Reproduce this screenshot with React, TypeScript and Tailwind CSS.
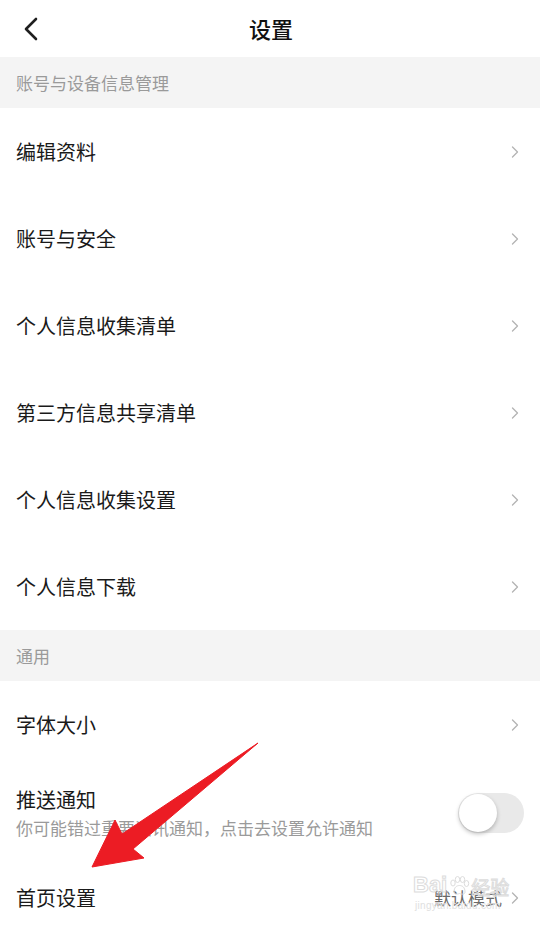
import React from "react";

const font = { fontFamily: '"Noto Sans CJK SC", "Noto Sans", sans-serif' };

function Chevron() {
  return (
    <svg width="8" height="14" viewBox="0 0 8 14" className="shrink-0">
      <path d="M1.5 2 L6.5 7 L1.5 12" fill="none" stroke="#b3b3b3" strokeWidth="1.3" strokeLinecap="round" strokeLinejoin="round" />
    </svg>
  );
}

function Section({ title }: { title: string }) {
  return (
    <div className="h-[51px] bg-[#f4f4f4] flex items-center pl-4 text-[17px] text-[#9a9a9a]">{title}</div>
  );
}

function Row({ label }: { label: string }) {
  return (
    <div className="h-[87px] flex items-center pl-4 pr-[21px] bg-white">
      <div className="flex-1 text-[20px] text-[#1a1a1a]">{label}</div>
      <Chevron />
    </div>
  );
}

export default function App() {
  return (
    <div className="relative w-[540px] h-[927px] overflow-hidden bg-white" style={font}>
      <div className="h-[57px] flex items-center relative bg-white">
        <svg width="16" height="24" viewBox="0 0 16 24" className="absolute left-[23px] top-[17px]">
          <path d="M13 2 L3 12 L13 22" fill="none" stroke="#1f1f1f" strokeWidth="2.6" strokeLinecap="round" strokeLinejoin="round" />
        </svg>
        <div className="flex-1 text-center text-[22px] font-medium text-[#111] pl-[2px]">设置</div>
      </div>
      <Section title="账号与设备信息管理" />
      <Row label="编辑资料" />
      <Row label="账号与安全" />
      <Row label="个人信息收集清单" />
      <Row label="第三方信息共享清单" />
      <Row label="个人信息收集设置" />
      <Row label="个人信息下载" />
      <Section title="通用" />
      <div className="h-[88px] flex items-center pl-4 pr-[21px]">
        <div className="flex-1 text-[20px] text-[#1a1a1a]">字体大小</div>
        <Chevron />
      </div>
      <div className="h-[87px] flex items-center pl-4 pr-[16px]">
        <div className="flex-1 flex flex-col gap-[2px]">
          <div className="text-[20px] text-[#1a1a1a] leading-[28px]">推送通知</div>
          <div className="text-[17px] text-[#9a9a9a] leading-[24px]">你可能错过重要资讯通知，点击去设置允许通知</div>
        </div>
        <div className="w-[66px] h-[40px] rounded-full bg-[#e9e9e9] flex items-center pl-[1px]">
          <div className="w-[38px] h-[38px] rounded-full bg-white shadow-[0_2px_4px_rgba(0,0,0,0.25)]" />
        </div>
      </div>
      <div className="h-[84px] flex items-center pl-4 pr-[21px]">
        <div className="flex-1 text-[20px] text-[#1a1a1a]">首页设置</div>
        <div className="text-[17px] text-[#6a6a6a] mr-[9px]">默认模式</div>
        <Chevron />
      </div>

      {/* watermark */}
      <div className="absolute left-[413px] top-[874px] pointer-events-none" style={{ fontFamily: '"Liberation Sans", sans-serif' }}>
        <div className="flex items-end leading-none">
          <span className="text-[22px] font-bold text-transparent [-webkit-text-stroke:1px_#dcdcdc]">Bai</span>
          <svg width="22" height="20" viewBox="0 0 22 20" className="mx-[1px]">
            <g fill="none" stroke="#dcdcdc" strokeWidth="1">
              <ellipse cx="5" cy="7" rx="2.2" ry="3" />
              <ellipse cx="9.5" cy="3.5" rx="2.2" ry="3" />
              <ellipse cx="14.5" cy="3.5" rx="2.2" ry="3" />
              <ellipse cx="18.5" cy="7.5" rx="2.2" ry="3" />
              <path d="M6 16 C6 11 9 9.5 11.5 9.5 C14 9.5 17 11 17 16 C17 18.5 14 18.5 11.5 17.5 C9 18.5 6 18.5 6 16 Z" />
            </g>
          </svg>
          <span className="text-[19px] text-transparent [-webkit-text-stroke:1px_#dcdcdc]" style={font}>经验</span>
        </div>
        <div className="text-[10px] leading-none mt-[5px] ml-[2px] text-[#e0e0e0] tracking-[0.3px]">jingyan.baidu.com</div>
      </div>

      {/* red arrow annotation */}
      <svg className="absolute left-0 top-0 pointer-events-none" width="540" height="927" viewBox="0 0 540 927">
        <polygon points="92,867 115,820 122,834 258,743 133,849 144,858" fill="#ec1c24" stroke="#ec1c24" strokeWidth="1" strokeLinejoin="round" />
      </svg>
    </div>
  );
}
